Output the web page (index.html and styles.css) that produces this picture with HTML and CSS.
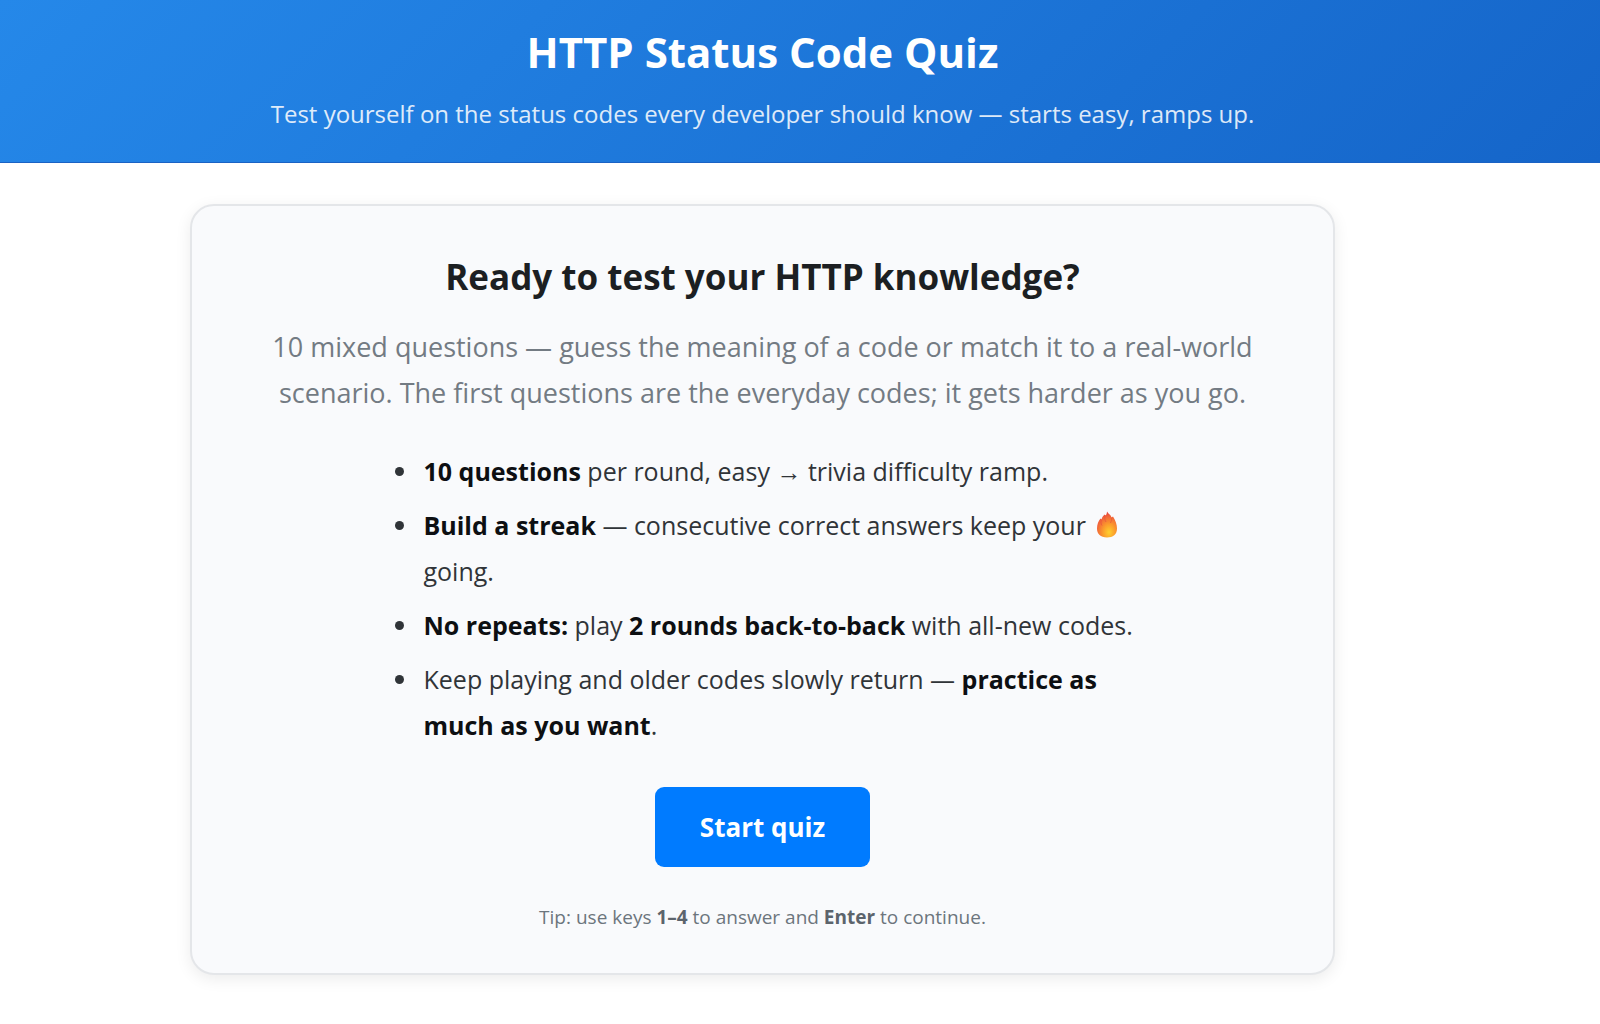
FILE: index.html
```html
<!DOCTYPE html>
<html lang="en">
<head>
    <meta charset="UTF-8">
    <meta name="viewport" content="width=device-width, initial-scale=1.0">
    <title>HTTP Status Code Quiz</title>
    <link rel="stylesheet" href="styles.css">
</head>
<body>
    <header class="page-header">
        <h1>HTTP Status Code Quiz</h1>
        <p>Test yourself on the status codes every developer should know — starts easy, ramps up.</p>
    </header>

    <main class="page-main">
        <section class="start-card">
            <h2>Ready to test your HTTP knowledge?</h2>
            <p class="lead">10 mixed questions — guess the meaning of a code or match it to a real-world scenario. The first questions are the everyday codes; it gets harder as you go.</p>

            <ul class="rules">
                <li><strong>10 questions</strong> per round, easy → trivia difficulty ramp.</li>
                <li><strong>Build a streak</strong> — consecutive correct answers keep your
                    <svg class="flame" viewBox="0 0 32 28" role="img" aria-label="fire">
                        <defs>
                            <radialGradient id="flame-fill" cx="0.6" cy="0.8" r="0.8">
                                <stop offset="0" stop-color="#ffd02e"/>
                                <stop offset="0.4" stop-color="#fb9a2c"/>
                                <stop offset="0.8" stop-color="#f0603a"/>
                                <stop offset="1" stop-color="#e03c3c"/>
                            </radialGradient>
                        </defs>
                        <path fill="url(#flame-fill)" d="M15 0.500C16.500 3 19 4 19.500 6.500L21 5.500C23.500 9.500 25 13.500 25 17.500C25 23.500 21 26.500 15 26.500C8.500 26.500 5 23 5 17.500C5 13 6.500 10 8.500 7.500L9.500 8.500C10 6.500 11 5 12.500 3.500L13.500 4.500C14.500 3.500 15 2 15 0.500Z"/>
                        <path fill="none" stroke="#e8563c" stroke-width="0.8" d="M9.500 8.500C8.500 11 9 13 10 14.500M13.500 4.500C12 7.500 13 9 14 11M19.500 6.500C20 9 19 10.500 18.500 12"/>
                    </svg>
                    going.</li>
                <li><strong>No repeats:</strong> play <strong>2 rounds back-to-back</strong> with all-new codes.</li>
                <li>Keep playing and older codes slowly return — <strong>practice as much as you want</strong>.</li>
            </ul>

            <button type="button" class="start-btn">Start quiz</button>

            <p class="tip">Tip: use keys <strong>1–4</strong> to answer and <strong>Enter</strong> to continue.</p>
        </section>
    </main>
</body>
</html>
```
FILE: styles.css
```css
* {
    box-sizing: border-box;
}

body {
    margin: 0;
    font-family: "Segoe UI", "Open Sans", "Noto Sans", sans-serif;
    color: #1c1f22;
    background: #fff;
}

h1, h2, p, ul {
    margin: 0;
}

.page-header {
    padding: 24px 75px 28px 0;
    text-align: center;
    color: #fff;
    background: linear-gradient(135deg, #2588e9, #1565c9);
    border-bottom: 1px solid #1a62c4;
}

.page-header h1 {
    font-size: 42px;
    line-height: 56px;
    margin-bottom: 14px;
}

.page-header p {
    font-size: 24px;
    line-height: 40px;
    opacity: 0.85;
}

.page-main {
    padding: 41px 265px 48px 190px;
}

.start-card {
    padding: 48px 72px 40px;
    text-align: center;
    background: #f9fafc;
    border: 2px solid #e4e6e9;
    border-radius: 24px;
    box-shadow: 0 4px 16px rgba(0, 0, 0, 0.08);
}

.start-card h2 {
    font-size: 35px;
    line-height: 46px;
    margin-bottom: 24px;
}

.lead {
    font-size: 27px;
    line-height: 46px;
    color: #737b83;
}

.rules {
    max-width: 764px;
    margin: 32px auto 39px;
    padding-left: 39px;
    text-align: left;
    font-size: 25px;
    line-height: 46px;
    color: #303438;
}

.rules li {
    padding-left: 4px;
}

.rules li + li {
    margin-top: 8px;
}

.rules strong {
    color: #0d0f12;
}

.flame {
    width: 32px;
    height: 28px;
    vertical-align: -4px;
}

.start-btn {
    padding: 20px 45px;
    font-family: inherit;
    font-size: 26px;
    font-weight: 700;
    line-height: 40px;
    color: #fff;
    background: #007bff;
    border: none;
    border-radius: 9px;
    cursor: pointer;
}

.tip {
    margin-top: 34px;
    font-size: 19px;
    line-height: 32px;
    color: #6c757d;
}

.tip strong {
    color: #5c646c;
}
```
